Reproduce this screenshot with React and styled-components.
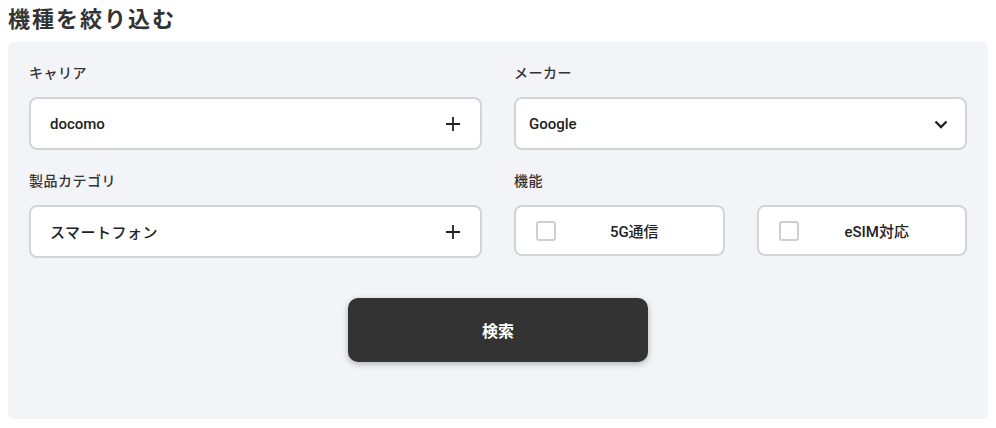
import React from 'react';
import styled, { createGlobalStyle } from 'styled-components';

const GlobalStyle = createGlobalStyle`
  body {
    margin: 0;
    background: #ffffff;
    font-family: Roboto, "Noto Sans CJK JP", "Noto Sans", sans-serif;
    color: #333333;
  }
`;

const Page = styled.div`
  padding: 0 8px 10px;
`;

const Title = styled.h2`
  margin: 0;
  height: 42px;
  padding-top: 2px;
  box-sizing: border-box;
  font-family: "Noto Sans CJK JP", sans-serif;
  font-size: 22px;
  font-weight: 600;
  letter-spacing: 2px;
  line-height: 30px;
  color: #333333;
`;

const Panel = styled.div`
  background: #f3f4f8;
  border-radius: 6px;
  padding: 22px 21px 57px;
`;

const Grid = styled.div`
  display: grid;
  grid-template-columns: 1fr 1fr;
  column-gap: 32px;
  row-gap: 22px;
`;

const Field = styled.div`
  display: flex;
  flex-direction: column;
`;

const Label = styled.div`
  font-size: 14px;
  font-weight: 500;
  letter-spacing: 0.5px;
  line-height: 18px;
  margin-bottom: 15px;
  color: #333333;
`;

const Box = styled.div`
  display: flex;
  align-items: center;
  height: 53px;
  box-sizing: border-box;
  background: #ffffff;
  border: 2px solid #d3d4d8;
  border-radius: 8px;
  padding: 0 ${({ $right }) => $right || 18}px 0 ${({ $left }) => $left || 19}px;
`;

const Value = styled.span`
  flex: 1;
  font-size: 15px;
  font-weight: 500;
  letter-spacing: ${({ $spaced }) => ($spaced ? '0.5px' : '0')};
  color: #222222;
`;

const Checks = styled.div`
  display: grid;
  grid-template-columns: 1fr 1fr;
  column-gap: 32px;
`;

const CheckBox = styled.label`
  display: flex;
  align-items: center;
  height: 51px;
  box-sizing: border-box;
  background: #ffffff;
  border: 2px solid #d3d4d8;
  border-radius: 8px;
  padding: 0 10px 0 20px;
  cursor: pointer;
`;

const Square = styled.span`
  width: 20px;
  height: 20px;
  box-sizing: border-box;
  border: 2px solid #cfcfd2;
  border-radius: 3px;
  flex-shrink: 0;
`;

const CheckText = styled.span`
  flex: 1;
  text-align: center;
  font-size: 15px;
  font-weight: 500;
  color: #222222;
`;

const Actions = styled.div`
  display: flex;
  justify-content: center;
  margin-top: 40px;
`;

const SearchButton = styled.button`
  width: 300px;
  height: 64px;
  border: none;
  border-radius: 10px;
  background: #333333;
  color: #ffffff;
  font-family: "Noto Sans CJK JP", sans-serif;
  font-size: 16px;
  font-weight: 700;
  box-shadow: 0 2px 6px rgba(0, 0, 0, 0.28);
  cursor: pointer;
`;

const Plus = () => (
  <svg width="16" height="16" viewBox="0 0 16 16" fill="none">
    <path d="M8 1v14M1 8h14" stroke="#222" strokeWidth="1.8" />
  </svg>
);

const Chevron = () => (
  <svg width="16" height="16" viewBox="0 0 16 16" fill="none">
    <path d="M2.5 5.5L8 11l5.5-5.5" stroke="#222" strokeWidth="2.4" />
  </svg>
);

const Check = ({ label }) => (
  <CheckBox>
    <Square />
    <CheckText>{label}</CheckText>
  </CheckBox>
);

export default function App() {
  return (
    <Page>
      <GlobalStyle />
      <Title>機種を絞り込む</Title>
      <Panel>
        <Grid>
          <Field>
            <Label>キャリア</Label>
            <Box $right={19}>
              <Value>docomo</Value>
              <Plus />
            </Box>
          </Field>
          <Field>
            <Label>メーカー</Label>
            <Box $left={13} $right={16}>
              <Value>Google</Value>
              <Chevron />
            </Box>
          </Field>
          <Field>
            <Label>製品カテゴリ</Label>
            <Box $right={19}>
              <Value $spaced>スマートフォン</Value>
              <Plus />
            </Box>
          </Field>
          <Field>
            <Label>機能</Label>
            <Checks>
              <Check label="5G通信" />
              <Check label="eSIM対応" />
            </Checks>
          </Field>
        </Grid>
        <Actions>
          <SearchButton>検索</SearchButton>
        </Actions>
      </Panel>
    </Page>
  );
}
